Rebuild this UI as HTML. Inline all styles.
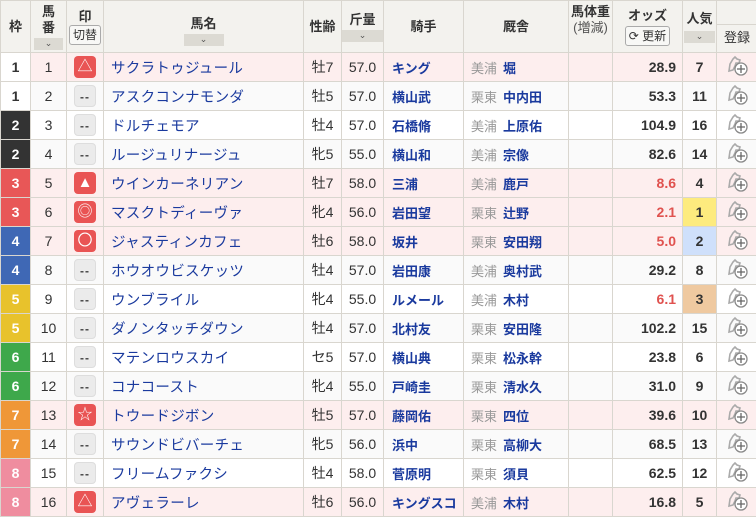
<!DOCTYPE html>
<html><head><meta charset="utf-8"><style>
*{margin:0;padding:0;box-sizing:border-box}
body{width:756px;height:515px;overflow:hidden;background:#fff;font-family:"Liberation Sans","Noto Sans CJK JP",sans-serif;color:#333}
table{border-collapse:collapse;table-layout:fixed;width:757px}
td,th{border:1px solid #d9d6cf;height:29px;font-size:14px;text-align:center;white-space:nowrap;overflow:hidden}
th{background:#f3f2ee;font-weight:bold;font-size:13px;color:#333;height:52px;position:relative;line-height:16px}
.srt{display:block;margin:2px auto 0;height:12px;background:#dcdad3;font-size:9px;line-height:11px;color:#555;font-weight:normal}
.btn{display:inline-block;border:1px solid #aaa;border-radius:3px;background:#f8f8f6;font-weight:normal;font-size:12px;line-height:18px;padding:0 3px}
.mk{display:inline-block;width:22px;height:22px;border-radius:4px;vertical-align:middle;line-height:22px;font-size:15px}
.r{background:#e95454;color:#fff}
.g{background:#ebebeb;color:#444;font-weight:bold;font-size:12px;border:1px solid #ddd;letter-spacing:1px}
.nm{text-align:left;padding-left:7px;color:#1a3a9e;font-size:14.5px;letter-spacing:.3px}
.jk{text-align:left;padding-left:8px;color:#1a3a9e;font-weight:bold;font-size:13px}
.st{text-align:left;padding-left:7px;font-size:13px;color:#1a3a9e;font-weight:bold}
.st span{color:#999;font-weight:normal;margin-right:6px}
.od{text-align:right;padding-right:6px;font-weight:bold;font-size:14px}
.red{color:#e0524f}
.pk td{background:#fdeeee}
.gy td{background:#fafafa}
.pop{font-weight:bold}
.f1{background:#fff!important;font-weight:bold}
.fx{color:#fff;font-weight:bold}
</style></head><body>
<table>
<colgroup><col style="width:30px"><col style="width:36px"><col style="width:37px"><col style="width:200px"><col style="width:38px"><col style="width:42px"><col style="width:80px"><col style="width:105px"><col style="width:44px"><col style="width:70px"><col style="width:34px"><col style="width:41px"></colgroup>
<tr><th>枠</th><th style="padding:0 3px">馬<br>番<span class="srt">&#8964;</span></th><th>印<br><span class="btn">切替</span></th><th style="padding-top:8px">馬名<span class="srt" style="width:40px">&#8964;</span></th><th>性齢</th><th style="padding:0 0">斤量<span class="srt">&#8964;</span></th><th>騎手</th><th>厩舎</th><th style="vertical-align:top;padding-top:3px;font-weight:bold">馬体重<br><span style="font-weight:normal;color:#555">(増減)</span></th><th>オッズ<br><span class="btn" style="margin-top:2px">&#10227; 更新</span></th><th style="padding:0">人気<span class="srt" style="margin:4px 1px 0">&#8964;</span></th><th style="padding:0;vertical-align:top"><div style="height:24px;border-bottom:1px solid #d9d6cf"></div><div style="font-weight:normal;line-height:26px">登録</div></th></tr>
</table>
<div id="b"></div>
<script>
var D=[
[1,1,'△','サクラトゥジュール','牡7','57.0','キング','美浦','堀','28.9','7'],
[1,2,'','アスクコンナモンダ','牡5','57.0','横山武','栗東','中内田','53.3','11'],
[2,3,'','ドルチェモア','牡4','57.0','石橋脩','美浦','上原佑','104.9','16'],
[2,4,'','ルージュリナージュ','牝5','55.0','横山和','美浦','宗像','82.6','14'],
[3,5,'▲','ウインカーネリアン','牡7','58.0','三浦','美浦','鹿戸','8.6','4'],
[3,6,'◎','マスクトディーヴァ','牝4','56.0','岩田望','栗東','辻野','2.1','1'],
[4,7,'〇','ジャスティンカフェ','牡6','58.0','坂井','栗東','安田翔','5.0','2'],
[4,8,'','ホウオウビスケッツ','牡4','57.0','岩田康','美浦','奥村武','29.2','8'],
[5,9,'','ウンブライル','牝4','55.0','ルメール','美浦','木村','6.1','3'],
[5,10,'','ダノンタッチダウン','牡4','57.0','北村友','栗東','安田隆','102.2','15'],
[6,11,'','マテンロウスカイ','セ5','57.0','横山典','栗東','松永幹','23.8','6'],
[6,12,'','コナコースト','牝4','55.0','戸崎圭','栗東','清水久','31.0','9'],
[7,13,'☆','トウードジボン','牡5','57.0','藤岡佑','栗東','四位','39.6','10'],
[7,14,'','サウンドビバーチェ','牝5','56.0','浜中','栗東','高柳大','68.5','13'],
[8,15,'','フリームファクシ','牡4','58.0','菅原明','栗東','須貝','62.5','12'],
[8,16,'△','アヴェラーレ','牡6','56.0','キングスコ','美浦','木村','16.8','5']];
var FC=['','#fff','#333','#e85757','#3f68b5','#e8c22c','#3ea84b','#ef9738','#ef8d9f'];
var PC={'1':'#fdeb7e','2':'#cfe0fb','3':'#efc9a0'};
var ic='<svg width="24" height="22" viewBox="0 0 24 22"><path d="M4 16 L5 9 L8 4 L10 2 L12 4 L15 5 L14 8 L11 8 L10 11 L8 15Z" fill="none" stroke="#aaa" stroke-width="1.6"/><circle cx="16" cy="14" r="6" fill="#fff" stroke="#888" stroke-width="1.3"/><path d="M16 10v8M12 14h8" stroke="#666" stroke-width="1.3"/></svg>';
var h='<table><colgroup><col style="width:30px"><col style="width:36px"><col style="width:37px"><col style="width:200px"><col style="width:38px"><col style="width:42px"><col style="width:80px"><col style="width:105px"><col style="width:44px"><col style="width:70px"><col style="width:34px"><col style="width:41px"></colgroup>';
D.forEach(function(r,i){
var cls=r[2]?'pk':(i%2?'gy':'');
var mk=r[2]?'<span class="mk r">'+r[2]+'</span>':'<span class="mk g">--</span>';
var red=parseFloat(r[9])<10;
var pc=PC[r[10]]?' style="background:'+PC[r[10]]+'"':'';
h+='<tr class="'+cls+'"><td class="'+(r[0]==1?'f1':'fx')+'" style="'+(r[0]==1?'':'background:'+FC[r[0]])+'">'+r[0]+'</td><td>'+r[1]+'</td><td>'+mk+'</td><td class="nm">'+r[3]+'</td><td>'+r[4]+'</td><td>'+r[5]+'</td><td class="jk">'+r[6]+'</td><td class="st"><span>'+r[7]+'</span>'+r[8]+'</td><td></td><td class="od'+(red?' red':'')+'">'+r[9]+'</td><td class="pop"'+pc+'>'+r[10]+'</td><td>'+ic+'</td></tr>';});
document.getElementById('b').innerHTML=h+'</table>';
</script>
<style>#b table{margin-top:-1px}</style>
</body></html>
